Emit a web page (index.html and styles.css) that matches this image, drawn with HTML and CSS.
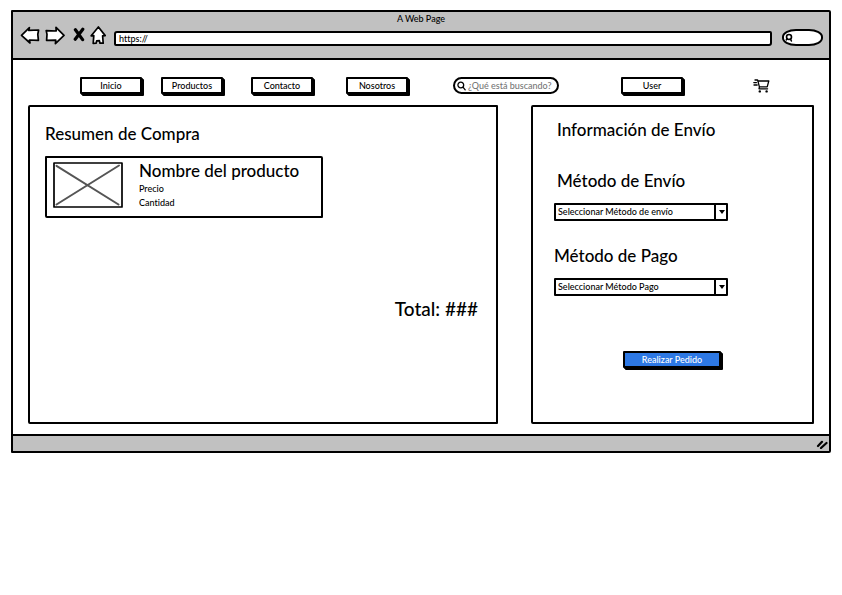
FILE: index.html
```html
<!DOCTYPE html>
<html lang="es">
<head>
<meta charset="utf-8">
<meta name="viewport" content="width=device-width, initial-scale=1">
<title>A Web Page</title>
<link rel="stylesheet" href="styles.css">
</head>
<body>
<div class="browser">
  <header class="chrome">
    <div class="chrome-title">A Web Page</div>
    <div class="toolbar">
      <div class="tools">
        <button class="tool" type="button" aria-label="Atrás">
          <svg width="20" height="20" viewBox="0 0 20 20"><path d="M1.5 9.4 L9.4 1.6 L8.8 4.4 L18.6 4 L17.8 8.4 L18.4 14.4 L9.4 14 L10 17 Z" class="outline"/></svg>
        </button>
        <button class="tool" type="button" aria-label="Adelante">
          <svg width="20" height="20" viewBox="0 0 20 20"><path d="M19 9.4 L11 1.4 L11.2 5 L1.2 4.6 L2 8.4 L1.6 14.4 L10.8 14.2 L10.4 17.6 Z" class="outline"/></svg>
        </button>
        <button class="tool tool-stop" type="button" aria-label="Detener">
          <svg width="12" height="20" viewBox="0 0 12 20"><path d="M2.4 3.8 L9.6 13.6 M9.8 3.2 L2.2 13.2" class="cross"/></svg>
        </button>
        <button class="tool" type="button" aria-label="Página principal">
          <svg width="16" height="20" viewBox="0 0 16 20"><path d="M8.4 1 L1.2 9.8 L3.8 9.6 L3.2 17.4 L6.2 17.2 L6.6 14.8 L9.4 14.6 L10 17.2 L13.2 17.2 L12.6 9.8 L15.2 9.6 Z" class="outline"/></svg>
        </button>
      </div>
      <input class="address" type="text" value="https://" aria-label="Dirección">
      <button class="quick-search" type="button" aria-label="Buscar en la web">
        <svg width="8" height="9" viewBox="0 0 8 9"><circle cx="4" cy="4" r="2.5" class="glass"/><path d="M1.4 6.8 L2.2 5.6 M5.4 6 L6.4 8" class="glass"/></svg>
      </button>
    </div>
  </header>

  <main class="page">
    <nav class="menu">
      <a class="key" href="#">Inicio</a>
      <a class="key" href="#">Productos</a>
      <a class="key" href="#">Contacto</a>
      <a class="key" href="#">Nosotros</a>
      <label class="search">
        <svg width="9" height="10" viewBox="0 0 9 10"><circle cx="3.8" cy="4" r="2.9" class="thin"/><path d="M6 6.2 L8.2 8.8" class="thin"/></svg>
        <input type="search" placeholder="¿Qué está buscando?" aria-label="Buscar">
      </label>
      <a class="key" href="#">User</a>
      <a class="cart" href="#" aria-label="Carrito">
        <svg width="18" height="16" viewBox="0 0 18 16"><path d="M2 2 H4.6 L6.4 8.8 H14.2 L15.8 3 H5.2 M6.4 8.8 L6 10.8 H14.6 M.8 4.6 H3.4 M1 7 H4.2" class="thin"/><circle cx="6.8" cy="13.4" r="1.2"/><circle cx="13.6" cy="13.4" r="1.2"/></svg>
      </a>
    </nav>

    <div class="panels">
      <section class="panel summary">
        <h2>Resumen de Compra</h2>
        <article class="product">
          <svg class="thumb" width="70" height="46" viewBox="0 0 70 46"><rect x="1" y="1" width="68" height="44" class="outline"/><path d="M3.5 3.8 L65.5 42.5 M66 3.5 L3.5 42.5" class="diagonals"/></svg>
          <div>
            <h3>Nombre del producto</h3>
            <p>Precio</p>
            <p>Cantidad</p>
          </div>
        </article>
        <p class="total">Total: ###</p>
      </section>

      <form class="panel shipping">
        <h2 class="info">Información de Envío</h2>
        <label class="method" for="envio">Método de Envío</label>
        <div class="select">
          <select id="envio"><option>Seleccionar Método de envío</option></select>
          <span class="arrow"><svg width="6" height="4" viewBox="0 0 6 4"><path d="M0 0 H6 L3 4 Z"/></svg></span>
        </div>
        <label class="method method-pay" for="pago">Método de Pago</label>
        <div class="select">
          <select id="pago"><option>Seleccionar Método Pago</option></select>
          <span class="arrow"><svg width="6" height="4" viewBox="0 0 6 4"><path d="M0 0 H6 L3 4 Z"/></svg></span>
        </div>
        <button class="key submit" type="button">Realizar Pedido</button>
      </form>
    </div>
  </main>

  <footer class="status">
    <svg width="12" height="10" viewBox="0 0 12 10"><path d="M2 7 L6 2.8 M5 9 L10.5 4" class="grip"/></svg>
  </footer>
</div>
</body>
</html>
```
FILE: styles.css
```css
* {
  box-sizing: border-box;
}

body {
  margin: 10px 11px;
  background: #fff;
  color: #000;
  font: 500 9px/14px Lato, "Noto Sans", sans-serif;
  font-variant-ligatures: none;
}

h2, h3, p {
  margin: 0;
  font-weight: 500;
}

button, input, select {
  color: inherit;
  font: inherit;
}

svg {
  display: block;
  flex: none;
}

.outline {
  fill: #fff;
  stroke: #000;
  stroke-width: 1.7;
  stroke-linejoin: round;
}

.thin, .glass, .cross, .diagonals, .grip {
  fill: none;
  stroke: #000;
  stroke-width: 1.3;
  stroke-linecap: round;
  stroke-linejoin: round;
}

.glass {
  stroke-width: 1.6;
}

.cross {
  stroke-width: 3.2;
}

.diagonals {
  stroke: #555;
  stroke-width: 2;
}

.grip {
  stroke-width: 2.2;
}

.browser {
  border: 2px solid #000;
  border-radius: 1px 2px 2px 1px;
}

.chrome {
  padding-bottom: 9px;
  border-bottom: 2px solid #000;
  background: #c1c1c1;
}

.chrome-title {
  text-align: center;
}

.toolbar {
  display: flex;
  align-items: flex-start;
  gap: 10px;
  height: 23px;
  padding: 0 6px 0 7px;
}

.tools {
  display: flex;
  gap: 5px;
  margin-right: -2px;
}

.tool {
  padding: 0;
  border: 0;
  background: none;
}

.tool-stop {
  margin-left: 3px;
}

.address {
  flex: 1;
  min-width: 0;
  height: 15px;
  margin-top: 5px;
  padding: 0 3px 1px;
  border: 2px solid #000;
  border-radius: 3px 2px 3px 2px;
  background: #fff;
}

.quick-search {
  width: 41px;
  height: 17px;
  margin-top: 3px;
  padding: 0 1px;
  border: 2px solid #000;
  border-radius: 14px / 8px;
  background: #fff;
}

.page {
  padding: 16px 15px 10px;
}

.menu {
  display: grid;
  grid-template-columns: 81fr 90fr 95fr 107fr 168fr 132fr 61fr;
  align-items: center;
  height: 19px;
  margin-left: 52px;
}

.key {
  width: 62px;
  height: 17px;
  padding: 0;
  border: 2px solid #000;
  border-radius: 1px;
  background: #fff;
  box-shadow: 1px 1px #000, 2px 2px #000;
  color: #000;
  line-height: 13px;
  text-align: center;
  text-decoration: none;
}

.search {
  display: flex;
  align-items: center;
  gap: 2px;
  width: 106px;
  height: 17px;
  padding: 0 0 0 2px;
  border: 2px solid #000;
  border-radius: 9px;
}

.search input {
  flex: 1;
  min-width: 0;
  height: 13px;
  padding: 0;
  border: 0;
  outline: 0;
  background: none;
  appearance: none;
}

.search input::-webkit-search-cancel-button {
  display: none;
}

.search input::placeholder {
  color: #777;
  opacity: 1;
}

.panels {
  display: grid;
  grid-template-columns: 470fr 283fr;
  gap: 33px;
  margin-top: 10px;
}

.panel {
  border: 2px solid #000;
  border-radius: 2px 1px 1px 2px;
}

h2, h3, .method {
  font-size: 17px;
  line-height: 20px;
}

.summary {
  min-height: 319px;
  padding: 17px 15px;
}

.product {
  display: flex;
  gap: 16px;
  width: 278px;
  max-width: 100%;
  margin-top: 12px;
  padding: 3px 6px 6px;
  border: 2px solid #000;
  border-radius: 1px 2px 1px 2px;
}

.thumb {
  margin-top: 1px;
}

.product h3 {
  margin-bottom: 1px;
}

.total {
  margin-top: 79px;
  padding-right: 3px;
  font-size: 19px;
  line-height: 24px;
  text-align: right;
}

.shipping {
  display: flex;
  flex-direction: column;
  align-items: flex-start;
  padding: 13px 22px 13px 21px;
}

.info {
  margin: 0 3px 31px;
}

.method {
  margin: 0 3px 12px;
}

.method-pay {
  margin-left: 0;
}

.select {
  position: relative;
  width: 174px;
  max-width: 100%;
  margin-bottom: 25px;
}

.select select {
  display: block;
  width: 100%;
  height: 18px;
  padding: 0 16px 2px 2px;
  border: 2px solid #000;
  border-radius: 1px;
  background: #fff;
  appearance: none;
}

.arrow {
  position: absolute;
  top: 0;
  right: 0;
  bottom: 0;
  display: flex;
  align-items: center;
  justify-content: center;
  width: 14px;
  border-left: 2px solid #000;
  pointer-events: none;
}

.submit {
  align-self: center;
  width: 98px;
  margin-top: 30px;
  background: #2d78e4;
  color: #fff;
}

.status {
  display: flex;
  align-items: center;
  justify-content: flex-end;
  height: 17px;
  padding-right: 1px;
  border-top: 2px solid #000;
  background: #c1c1c1;
}
```
